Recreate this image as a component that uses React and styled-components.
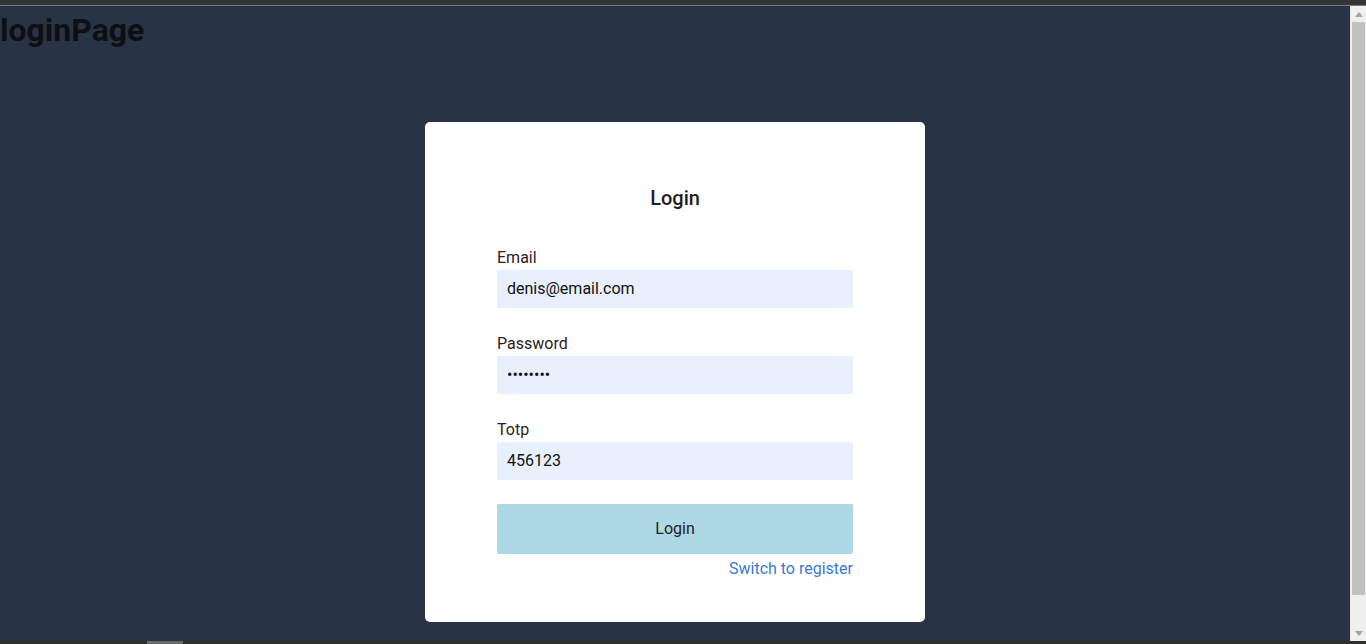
import React from "react";
import styled, { createGlobalStyle } from "styled-components";

const Global = createGlobalStyle`
  html, body { margin: 0; padding: 0; height: 100%; overflow: hidden; }
  body { font-family: Roboto, "Liberation Sans", Arial, sans-serif; background: #283345; }
  * { box-sizing: border-box; }
`;

const Screen = styled.div`
  width: 1366px;
  height: 644px;
  display: flex;
  flex-direction: column;
  background: #283345;
`;

const TopBar = styled.div`
  height: 6px;
  flex: none;
  background: #353535;
  border-bottom: 1px solid #7a7a7a;
`;

const Middle = styled.div`
  flex: 1;
  display: flex;
  min-height: 0;
`;

const Main = styled.main`
  flex: 1;
  padding-top: 6px;
  display: flex;
  flex-direction: column;
  align-items: center;
`;

const PageTitle = styled.h1`
  align-self: flex-start;
  margin: 0;
  font-size: 32px;
  line-height: 37.5px;
  font-weight: 700;
  color: #0e0f12;
`;

const Card = styled.section`
  margin-top: 72px;
  width: 500px;
  height: 500px;
  background: #ffffff;
  border-radius: 5px;
  padding: 64px 72px 0;
  display: flex;
  flex-direction: column;
`;

const CardTitle = styled.h2`
  margin: 0 0 38px;
  text-align: center;
  font-size: 20px;
  line-height: 24px;
  font-weight: 500;
  color: #1e1e1e;
`;

const Form = styled.form`
  display: flex;
  flex-direction: column;
  gap: 26px;
`;

const Field = styled.div`
  display: flex;
  flex-direction: column;
  gap: 3px;
`;

const Label = styled.label`
  font-size: 16px;
  line-height: 19px;
  color: #2a2222;
`;

const Input = styled.input`
  height: 38px;
  width: 100%;
  border: none;
  outline: none;
  border-radius: 0;
  background: #e8f0fe;
  padding: 0 10px;
  font-family: Roboto, "Liberation Sans", Arial, sans-serif;
  font-size: 16px;
  color: #111;
`;

const Button = styled.button`
  margin-top: -2px;
  height: 50px;
  width: 100%;
  border: none;
  border-radius: 2px;
  background: #add8e6;
  font-family: Roboto, "Liberation Sans", Arial, sans-serif;
  font-size: 16px;
  color: #222;
  cursor: pointer;
`;

const SwitchLink = styled.a`
  align-self: flex-end;
  margin-top: 5px;
  font-size: 16px;
  line-height: 19px;
  color: #3a78d8;
  text-decoration: none;
  cursor: pointer;
`;

const ScrollTrack = styled.div`
  width: 16px;
  flex: none;
  background: #f0f0f0;
  border-left: 1px solid #e6e6e6;
  display: flex;
  flex-direction: column;
  align-items: center;
  padding: 0 1px;
`;

const Arrow = styled.div`
  height: 16px;
  flex: none;
  display: flex;
  align-items: center;
  justify-content: center;
  width: 100%;
  margin-top: ${(p) => (p.$end ? "auto" : "0")};
`;

const Thumb = styled.div`
  width: 13px;
  height: 573px;
  flex: none;
  background: #c1c1c1;
`;

const BottomBar = styled.div`
  height: 3px;
  flex: none;
  background: #2e2f2a;
  display: flex;
  padding-left: 147px;
`;

const BottomMark = styled.div`
  width: 36px;
  background: #6a6a6a;
`;

const ArrowIcon = ({ down }) => (
  <svg width="8" height="5" viewBox="0 0 8 5">
    <path d={down ? "M0 0 L8 0 L4 5 Z" : "M0 5 L8 5 L4 0 Z"} fill="#a3a3a3" />
  </svg>
);

export default function App() {
  return (
    <Screen>
      <Global />
      <TopBar />
      <Middle>
        <Main>
          <PageTitle>loginPage</PageTitle>
          <Card>
            <CardTitle>Login</CardTitle>
            <Form onSubmit={(e) => e.preventDefault()}>
              <Field>
                <Label htmlFor="email">Email</Label>
                <Input id="email" type="email" defaultValue="denis@email.com" />
              </Field>
              <Field>
                <Label htmlFor="password">Password</Label>
                <Input id="password" type="password" defaultValue="12345678" />
              </Field>
              <Field>
                <Label htmlFor="totp">Totp</Label>
                <Input id="totp" type="text" defaultValue="456123" />
              </Field>
              <Button type="submit">Login</Button>
            </Form>
            <SwitchLink>Switch to register</SwitchLink>
          </Card>
        </Main>
        <ScrollTrack>
          <Arrow>
            <ArrowIcon />
          </Arrow>
          <Thumb />
          <Arrow $end>
            <ArrowIcon down />
          </Arrow>
        </ScrollTrack>
      </Middle>
      <BottomBar>
        <BottomMark />
      </BottomBar>
    </Screen>
  );
}
